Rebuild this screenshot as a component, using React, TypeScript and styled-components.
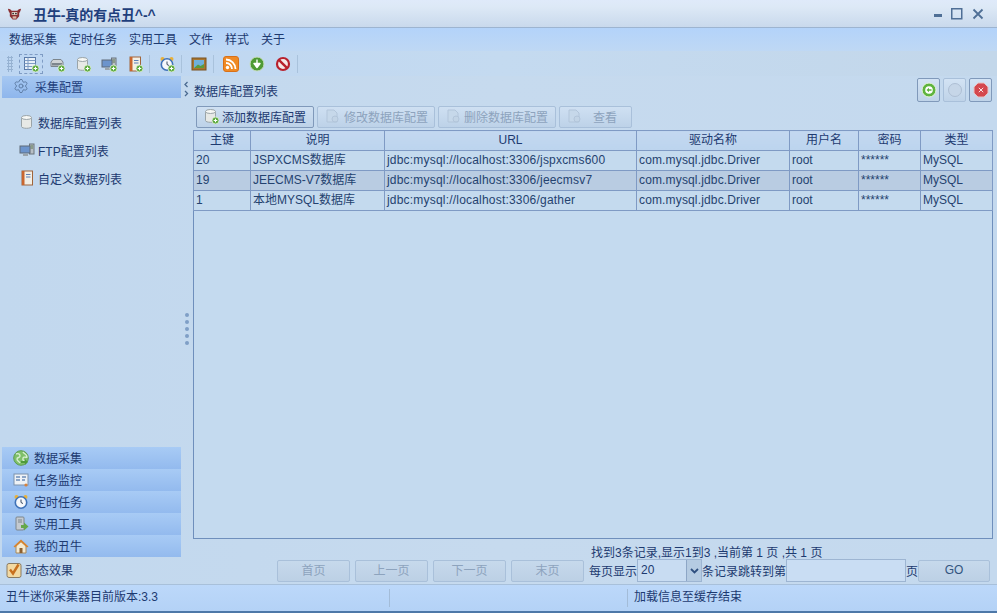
import { ReactNode } from "react";
import styled, { createGlobalStyle } from "styled-components";
import { Settings } from "lucide-react";

const GlobalStyle = createGlobalStyle`
  html, body { margin: 0; padding: 0; background: #c6daee; }
  * { box-sizing: border-box; }
  body { font-family: "Liberation Sans", "Noto Sans CJK SC", sans-serif; font-size: 12px; color: #1d3a70; }
`;

const Frame = styled.div`
  width: 997px;
  height: 613px;
  display: flex;
  flex-direction: column;
  overflow: hidden;
  background: linear-gradient(90deg, #c2d8ee 0%, #c6daee 50%, #c4d9ee 100%);
  border-bottom: 2px solid #4d78a8;
`;
const TitleBar = styled.div`
  height: 28px;
  flex: none;
  display: flex;
  align-items: center;
  padding: 0 12px 0 7px;
  background: linear-gradient(180deg, #dfeafa 0%, #dde9f6 25%, #c9d9ec 100%);
  border-bottom: 1px solid #9db4d0;
`;
const Title = styled.div`
  margin-left: 11px;
  flex: 1;
  font-size: 14px;
  font-weight: 700;
  letter-spacing: -0.1px;
  color: #1f3f7c;
`;
const WinButtons = styled.div`
  display: flex;
  align-items: center;
  gap: 9px;
  margin-right: 1px;
`;
const MenuBar = styled.div`
  height: 23px;
  flex: none;
  display: flex;
  align-items: center;
  padding: 0 0 2px 9px;
  gap: 12px;
  background: linear-gradient(180deg, #b3d3fa 0%, #bfd8f4 100%);
`;
const ToolBar = styled.div`
  height: 25px;
  flex: none;
  display: flex;
  align-items: center;
  padding-left: 7px;
  background: linear-gradient(90deg, #bdd6f2 0%, #c4daf0 50%, #c3d7ea 100%);
`;
const Grip = styled.div`
  width: 6px;
  height: 16px;
  margin-right: 7px;
  background-image: radial-gradient(circle, #96b2d2 1px, transparent 1.2px);
  background-size: 3px 3px;
`;
const ToolSlot = styled.div<{ $selected?: boolean }>`
  width: 22px;
  height: 18px;
  margin-right: 4px;
  display: flex;
  align-items: center;
  justify-content: center;
  outline: ${(p) => (p.$selected ? "1px dashed #7f9cc4" : "none")};
`;
const ToolSep = styled.div`
  width: 1px;
  height: 18px;
  margin: 0 6px 0 -1px;
  background: #a9c2dc;
`;
const Main = styled.div`
  flex: 1;
  min-height: 0;
  display: flex;
`;
const Sidebar = styled.aside`
  width: 181px;
  flex: none;
  display: flex;
  flex-direction: column;
  padding-left: 2px;
`;
const SectionHead = styled.div`
  height: 22px;
  flex: none;
  display: flex;
  align-items: center;
  gap: 6px;
  padding: 0 0 2px 11px;
  background: linear-gradient(180deg, #a6c8f2 0%, #8eb6ec 100%);
  color: #1f3f7c;
`;
const NavList = styled.div`
  flex: 1;
  display: flex;
  flex-direction: column;
  gap: 8px;
  padding: 15px 0 0 17px;
`;
const NavItem = styled.div`
  height: 20px;
  display: flex;
  align-items: center;
  gap: 3px;
  padding-bottom: 2px;
`;
const AccordionItem = styled.div`
  height: 22px;
  flex: none;
  display: flex;
  align-items: center;
  gap: 5px;
  padding: 0 0 1px 11px;
  background: linear-gradient(180deg, #a8cbf5 0%, #93baee 100%);
`;
const CheckRow = styled.div`
  height: 27px;
  flex: none;
  display: flex;
  align-items: center;
  gap: 3px;
  padding: 0 0 2px 4px;
`;
const Splitter = styled.div`
  width: 12px;
  flex: none;
  position: relative;
  display: flex;
  flex-direction: column;
  align-items: center;
  justify-content: center;
  gap: 3px;
  padding-bottom: 2px;
`;
const Dot = styled.span`
  width: 4px;
  height: 4px;
  border-radius: 50%;
  background: #7f9fc6;
`;
const CollapseArrows = styled.svg`
  position: absolute;
  top: 5px;
  left: 2px;
`;
const Content = styled.section`
  flex: 1;
  min-width: 0;
  display: flex;
  flex-direction: column;
  padding-right: 4px;
`;
const HeadRow = styled.div`
  height: 30px;
  flex: none;
  display: flex;
  align-items: flex-start;
  justify-content: space-between;
  padding: 2px 1px 0 1px;
`;
const HeadTitle = styled.div`
  padding-top: 4px;
`;
const PanelButtons = styled.div`
  display: flex;
  gap: 3px;
`;
const PanelButton = styled.button<{ $off?: boolean }>`
  width: 23px;
  height: 24px;
  padding: 0;
  display: flex;
  align-items: center;
  justify-content: center;
  border-radius: 2px;
  border: 1px solid ${(p) => (p.$off ? "#a9c0da" : "#8099ba")};
  background: linear-gradient(180deg, #d3e3f4 0%, #bfd3e8 100%);
`;
const ActionRow = styled.div`
  height: 24px;
  flex: none;
  display: flex;
  gap: 3px;
  padding-left: 3px;
`;
const ActionButton = styled.button<{ $w: number; $gap: number; $off?: boolean }>`
  width: ${(p) => p.$w}px;
  height: 22px;
  padding: 0 0 2px 6px;
  display: flex;
  align-items: center;
  gap: ${(p) => p.$gap}px;
  font: inherit;
  color: ${(p) => (p.$off ? "#8da3bd" : "#1d3a70")};
  border-radius: 2px;
  border: 1px solid ${(p) => (p.$off ? "#a9c0da" : "#8099ba")};
  background: linear-gradient(180deg, #cfe0f2 0%, #bdd2e8 100%);
`;
const TableBox = styled.div`
  flex: 1;
  min-height: 0;
  border: 1px solid #6f8fbc;
  background: #c4daef;
`;
const Table = styled.table`
  border-collapse: collapse;
  table-layout: fixed;
  width: 799px;
  margin: -1px 0 0 -1px;
`;
const Th = styled.th<{ $w: number }>`
  width: ${(p) => p.$w}px;
  height: 20px;
  padding: 0 0 2px;
  line-height: 16px;
  font-weight: 400;
  border: 1px solid #7f9ac4;
  background: linear-gradient(180deg, #c3d8f0 0%, #bcd4ee 100%);
`;
const Td = styled.td<{ $alt?: boolean; $track?: number }>`
  height: 20px;
  padding: 0 0 2px 2px;
  line-height: 16px;
  color: #24426f;
  letter-spacing: ${(p) => p.$track ?? 0}px;
  white-space: nowrap;
  overflow: hidden;
  border: 1px solid #7f9ac4;
  background: ${(p) => (p.$alt ? "#b9cce2" : "#c4daee")};
`;
const Summary = styled.div`
  height: 20px;
  flex: none;
  padding: 7px 0 0 398px;
  line-height: 14px;
  white-space: nowrap;
`;
const Pager = styled.div`
  height: 25px;
  flex: none;
  display: flex;
  align-items: center;
  margin-left: 84px;
  white-space: nowrap;
  padding-bottom: 2px;
`;
const PagerButton = styled.button<{ $w?: number; $off?: boolean }>`
  width: ${(p) => p.$w ?? 73}px;
  flex: none;
  height: 22px;
  margin-right: 5px;
  padding: 0 0 2px;
  font: inherit;
  color: ${(p) => (p.$off ? "#8da3bd" : "#33557f")};
  border-radius: 2px;
  border: 1px solid #a9c0da;
  background: linear-gradient(180deg, #c6d9ec 0%, #bcd0e5 100%);
`;
const PageSize = styled.div`
  width: 65px;
  height: 23px;
  flex: none;
  display: flex;
  border: 1px solid #9db5d2;
  background: #c8dcf2;
`;
const PageSizeValue = styled.div`
  flex: 1;
  padding: 3px 0 0 3px;
`;
const PageSizeArrow = styled.div`
  width: 15px;
  display: flex;
  align-items: center;
  justify-content: center;
  border-left: 1px solid #8da6c6;
  background: #b5cbe2;
`;
const JumpInput = styled.div`
  width: 120px;
  height: 23px;
  flex: none;
  border: 1px solid #9db5d2;
  background: #c9ddf3;
`;
const StatusBar = styled.footer`
  height: 27px;
  flex: none;
  display: flex;
  align-items: center;
  background: linear-gradient(180deg, #bcd8fa 0%, #b4d2f6 100%);
  border-top: 1px solid #a8c0da;
`;
const StatusCell = styled.div<{ $w?: number }>`
  width: ${(p) => (p.$w ? `${p.$w}px` : "auto")};
  flex: ${(p) => (p.$w ? "none" : 1)};
  height: 18px;
  line-height: 16px;
  padding-left: 6px;
  border-right: 1px solid ${(p) => (p.$w ? "#a3bcd8" : "transparent")};
`;
const IconSvg = styled.svg`
  flex: none;
`;
const GearIcon = styled(Settings)`
  flex: none;
  color: #5f7ea6;
`;

type IconKind =
  | "logo" | "table" | "drive" | "db" | "pc" | "note" | "clock" | "picture" | "rss" | "down" | "stop"
  | "globe" | "monitor" | "tools" | "home" | "check" | "add" | "ghost" | "faint" | "red";

function Plus() {
  return (
    <g>
      <circle cx="12.5" cy="12.5" r="3.5" fill="#5aa83c" stroke="#e8f4e0" strokeWidth=".8" />
      <path d="M10.7 12.5h3.6M12.5 10.7v3.6" stroke="#fff" strokeWidth="1.1" />
    </g>
  );
}

function Icon({ kind, size = 16, plus }: { kind: IconKind; size?: number; plus?: boolean }) {
  const shapes: Record<IconKind, ReactNode> = {
    logo: (
      <g>
        <path d="M1 3c2 0 3 1 4 2h6c1-1 2-2 4-2-.4 2-1 3.500-2 4.500V11l-3 3.500H6L3 11V7.500C2 6.500 1.400 5 1 3z" fill="#8a2f32" />
        <path d="M5 6.500h6v3H5z" fill="#e8dcd0" />
        <circle cx="6.500" cy="8" r=".9" fill="#222" /><circle cx="9.500" cy="8" r=".9" fill="#222" />
        <path d="M6 11h4v2.500H6z" fill="#d9b7a6" />
      </g>
    ),
    table: (
      <g>
        <rect x="1.500" y="1.500" width="11" height="12" fill="#e8f0f8" stroke="#5a7aa8" />
        <path d="M1.500 4.500h11M1.500 7.500h11M1.500 10.500h11M5 1.500v12" stroke="#7f9cc4" />
      </g>
    ),
    drive: (
      <g>
        <path d="M2 6l2-2.500h8L14 6v4.500H2z" fill="#cfd3d6" stroke="#7c858c" />
        <rect x="3" y="7" width="10" height="2.500" fill="#7d868d" />
      </g>
    ),
    db: (
      <g>
        <path d="M2.500 3.500v9c0 2.400 10 2.400 10 0v-9z" fill="#e7e9e6" stroke="#9aa4a8" />
        <ellipse cx="7.500" cy="3.500" rx="5" ry="2" fill="#f7f8f5" stroke="#9aa4a8" />
      </g>
    ),
    pc: (
      <g>
        <rect x="10.500" y="2" width="4.500" height="10" fill="#b8bfc5" stroke="#6a747c" />
        <path d="M11.500 4h2.500M11.500 6h2.500" stroke="#5f7a50" />
        <rect x="1" y="4" width="10" height="7" fill="#6c94cc" stroke="#5e6a78" />
        <path d="M4 13h5" stroke="#9aa4ac" strokeWidth="2" />
      </g>
    ),
    note: (
      <g>
        <rect x="3" y="1" width="10.500" height="14" fill="#f2efe6" stroke="#a0653a" />
        <path d="M3 1h2.500v14H3z" fill="#c9662f" />
        <path d="M7 4.500h4.500M7 7h4.500" stroke="#5b7fb8" />
      </g>
    ),
    clock: (
      <g>
        <circle cx="3.500" cy="3" r="2" fill="#e8b13a" /><circle cx="12.500" cy="3" r="2" fill="#e8b13a" />
        <circle cx="8" cy="8.500" r="5.700" fill="#f6f8fb" stroke="#3f72b8" strokeWidth="1.600" />
        <path d="M8 5.500v3l2 1" stroke="#3a4a60" fill="none" />
      </g>
    ),
    picture: (
      <g>
        <rect x="1" y="2" width="14" height="12" fill="#a9762f" stroke="#7a5320" />
        <rect x="3" y="4" width="10" height="8" fill="#6fb0dc" />
        <path d="M3 12l4-3.500 2.500 1.500 3.500-2v4z" fill="#5b9a3e" />
      </g>
    ),
    rss: (
      <g>
        <rect x=".5" y=".5" width="15" height="15" rx="2.500" fill="#f08a24" stroke="#d87018" />
        <circle cx="4.500" cy="11.500" r="1.700" fill="#fff" />
        <path d="M3 7a6 6 0 0 1 6 6M3 3.500A9.500 9.500 0 0 1 12.500 13" fill="none" stroke="#fff" strokeWidth="1.800" />
      </g>
    ),
    down: (
      <g>
        <circle cx="8" cy="8" r="7" fill="#4f9a34" stroke="#c9ddc0" />
        <path d="M8 3.500v5M5 7.500l3 4 3-4z" stroke="#fff" fill="#fff" strokeWidth="1.400" strokeLinejoin="round" />
      </g>
    ),
    stop: (
      <g>
        <circle cx="8" cy="8" r="6" fill="#f4e8e8" stroke="#b8202c" strokeWidth="2.200" />
        <path d="M3.800 3.800l8.400 8.400" stroke="#b8202c" strokeWidth="2.400" />
      </g>
    ),
    globe: (
      <g>
        <circle cx="8" cy="8" r="7.300" fill="#7fc06a" stroke="#5d9c52" />
        <path d="M3 4c2-1 4 0 4 2s-3 1-3 3 2 2 3 4M10 2c1 2 4 2 4 5-2 1-3-1-4 1s1 3 2 4" fill="none" stroke="#d7eed0" strokeWidth="1.400" />
        <path d="M8 11h4v-2l3 3-3 3v-2H8z" fill="#4e9a3a" />
      </g>
    ),
    monitor: (
      <g>
        <rect x="1" y="2" width="14" height="11" fill="#eef2f6" stroke="#7c92ac" />
        <path d="M3 5h4M3 8h4M9 5h4M9 8h3" stroke="#6d8db8" strokeWidth="1.300" />
        <circle cx="13" cy="13" r="1.600" fill="#d8813a" />
      </g>
    ),
    tools: (
      <g>
        <rect x="3" y="1" width="8" height="13" rx="1" fill="#c4cad0" stroke="#7d868d" />
        <path d="M5 4h4M5 6h4" stroke="#7d868d" />
        <path d="M8 9h3V6.500l4.500 4-4.500 4V12H8z" fill="#65a84a" />
      </g>
    ),
    home: (
      <g>
        <path d="M3 8v7h10V8L8 3.500z" fill="#f4ead2" stroke="#a98a5a" />
        <path d="M.5 8.500L8 1.500l7.500 7-1.500 1L8 4 2 9.500z" fill="#d8842e" />
        <rect x="6.500" y="10" width="3" height="5" fill="#8d5f2e" />
      </g>
    ),
    check: (
      <g>
        <rect x="1" y="1.500" width="14" height="14" rx="2" fill="#f2d9a2" stroke="#8a7a60" />
        <path d="M4 7.500l3 4 5.500-9" fill="none" stroke="#c8701e" strokeWidth="2.400" />
      </g>
    ),
    add: (
      <g>
        <circle cx="8" cy="8" r="7" fill="#5fb43e" stroke="#e6f2df" />
        <circle cx="8" cy="8" r="3.800" fill="#fff" />
        <path d="M5.500 8L8 5.800v1.400h2.500v1.600H8v1.400z" fill="#5fb43e" />
      </g>
    ),
    ghost: <circle cx="8" cy="8" r="6.500" fill="#c6d6e8" stroke="#aebfd4" />,
    faint: (
      <g>
        <path d="M3 2h7l3 3v9H3z" fill="#c6d8ea" stroke="#b2c5da" />
        <circle cx="11" cy="11" r="3" fill="#c2d4e6" stroke="#b2c5da" />
      </g>
    ),
    red: (
      <g>
        <path d="M5 1h6l4 4v6l-4 4H5l-4-4V5z" fill="#d4484e" stroke="#e9c0c0" />
        <path d="M5.800 5.800l4.400 4.400M10.200 5.800l-4.400 4.400" stroke="#fbe6e6" strokeWidth="1" />
      </g>
    ),
  };
  return (
    <IconSvg width={size} height={size} viewBox="0 0 16 16">
      {shapes[kind]}
      {plus && <Plus />}
    </IconSvg>
  );
}

const columns = [
  { label: "主键", w: 57 },
  { label: "说明", w: 134 },
  { label: "URL", w: 252 },
  { label: "驱动名称", w: 153 },
  { label: "用户名", w: 69 },
  { label: "密码", w: 62 },
  { label: "类型", w: 72 },
];

const rows = [
  { id: "20", name: "JSPXCMS数据库", url: "jdbc:mysql://localhost:3306/jspxcms600" },
  { id: "19", name: "JEECMS-V7数据库", url: "jdbc:mysql://localhost:3306/jeecmsv7" },
  { id: "1", name: "本地MYSQL数据库", url: "jdbc:mysql://localhost:3306/gather" },
];

export default function App() {
  return (
    <Frame>
      <GlobalStyle />
      <TitleBar>
        <Icon kind="logo" size={15} />
        <Title>丑牛-真的有点丑^-^</Title>
        <WinButtons>
          <svg width="8" height="8" viewBox="0 0 8 8"><rect y="4" width="8" height="3" fill="#4f6f96" /></svg>
          <svg width="12" height="12" viewBox="0 0 12 12"><rect x=".75" y=".75" width="10" height="10" fill="none" stroke="#4f6f96" strokeWidth="1.500" /></svg>
          <svg width="12" height="12" viewBox="0 0 12 12"><path d="M1.500 1.500l9 9M10.500 1.500l-9 9" stroke="#4f6f96" strokeWidth="1.800" /></svg>
        </WinButtons>
      </TitleBar>
      <MenuBar>
        {["数据采集", "定时任务", "实用工具", "文件", "样式", "关于"].map((m) => (
          <span key={m}>{m}</span>
        ))}
      </MenuBar>
      <ToolBar>
        <Grip />
        <ToolSlot $selected><Icon kind="table" plus /></ToolSlot>
        <ToolSlot><Icon kind="drive" plus /></ToolSlot>
        <ToolSlot><Icon kind="db" plus /></ToolSlot>
        <ToolSlot><Icon kind="pc" plus /></ToolSlot>
        <ToolSlot><Icon kind="note" plus /></ToolSlot>
        <ToolSep />
        <ToolSlot><Icon kind="clock" plus /></ToolSlot>
        <ToolSep />
        <ToolSlot><Icon kind="picture" /></ToolSlot>
        <ToolSep />
        <ToolSlot><Icon kind="rss" /></ToolSlot>
        <ToolSlot><Icon kind="down" /></ToolSlot>
        <ToolSlot><Icon kind="stop" /></ToolSlot>
        <ToolSep />
      </ToolBar>
      <Main>
        <Sidebar>
          <SectionHead><GearIcon size={16} strokeWidth={1.5} />采集配置</SectionHead>
          <NavList>
            <NavItem><Icon kind="db" />数据库配置列表</NavItem>
            <NavItem><Icon kind="pc" />FTP配置列表</NavItem>
            <NavItem><Icon kind="note" />自定义数据列表</NavItem>
          </NavList>
          <AccordionItem><Icon kind="globe" />数据采集</AccordionItem>
          <AccordionItem><Icon kind="monitor" />任务监控</AccordionItem>
          <AccordionItem><Icon kind="clock" />定时任务</AccordionItem>
          <AccordionItem><Icon kind="tools" />实用工具</AccordionItem>
          <AccordionItem><Icon kind="home" />我的丑牛</AccordionItem>
          <CheckRow><Icon kind="check" />动态效果</CheckRow>
        </Sidebar>
        <Splitter>
          <CollapseArrows width="6" height="16" viewBox="0 0 6 16">
            <path d="M4.500 1L2 3.500 4.500 6M2 10l2.500 2.500L2 15" fill="none" stroke="#4a6a90" strokeWidth="1.300" />
          </CollapseArrows>
          {[0, 1, 2, 3, 4].map((i) => <Dot key={i} />)}
        </Splitter>
        <Content>
          <HeadRow>
            <HeadTitle>数据库配置列表</HeadTitle>
            <PanelButtons>
              <PanelButton><Icon kind="add" /></PanelButton>
              <PanelButton $off><Icon kind="ghost" /></PanelButton>
              <PanelButton><Icon kind="red" /></PanelButton>
            </PanelButtons>
          </HeadRow>
          <ActionRow>
            <ActionButton $w={118} $gap={3}><Icon kind="db" plus />添加数据库配置</ActionButton>
            <ActionButton $w={118} $gap={4} $off><Icon kind="faint" />修改数据库配置</ActionButton>
            <ActionButton $w={118} $gap={3} $off><Icon kind="faint" />删除数据库配置</ActionButton>
            <ActionButton $w={73} $gap={11} $off><Icon kind="faint" />查看</ActionButton>
          </ActionRow>
          <TableBox>
            <Table>
              <thead>
                <tr>{columns.map((c) => <Th key={c.label} $w={c.w}>{c.label}</Th>)}</tr>
              </thead>
              <tbody>
                {rows.map((r, i) => (
                  <tr key={r.id}>
                    <Td $alt={i === 1}>{r.id}</Td>
                    <Td $alt={i === 1}>{r.name}</Td>
                    <Td $alt={i === 1} $track={0.2}>{r.url}</Td>
                    <Td $alt={i === 1} $track={0.15}>com.mysql.jdbc.Driver</Td>
                    <Td $alt={i === 1}>root</Td>
                    <Td $alt={i === 1}>******</Td>
                    <Td $alt={i === 1}>MySQL</Td>
                  </tr>
                ))}
              </tbody>
            </Table>
          </TableBox>
          <Summary>找到3条记录,显示1到3 ,当前第 1 页 ,共 1 页</Summary>
          <Pager>
            <PagerButton $off>首页</PagerButton>
            <PagerButton $off>上一页</PagerButton>
            <PagerButton $off>下一页</PagerButton>
            <PagerButton $off>末页</PagerButton>
            每页显示
            <PageSize>
              <PageSizeValue>20</PageSizeValue>
              <PageSizeArrow>
                <svg width="9" height="6" viewBox="0 0 9 6"><path d="M1 1l3.500 3.500L8 1" fill="none" stroke="#2f4f7f" strokeWidth="1.800" /></svg>
              </PageSizeArrow>
            </PageSize>
            条记录跳转到第
            <JumpInput />
            页
            <PagerButton $w={72}>GO</PagerButton>
          </Pager>
        </Content>
      </Main>
      <StatusBar>
        <StatusCell $w={390}>丑牛迷你采集器目前版本:3.3</StatusCell>
        <StatusCell $w={238} />
        <StatusCell>加载信息至缓存结束</StatusCell>
      </StatusBar>
    </Frame>
  );
}
